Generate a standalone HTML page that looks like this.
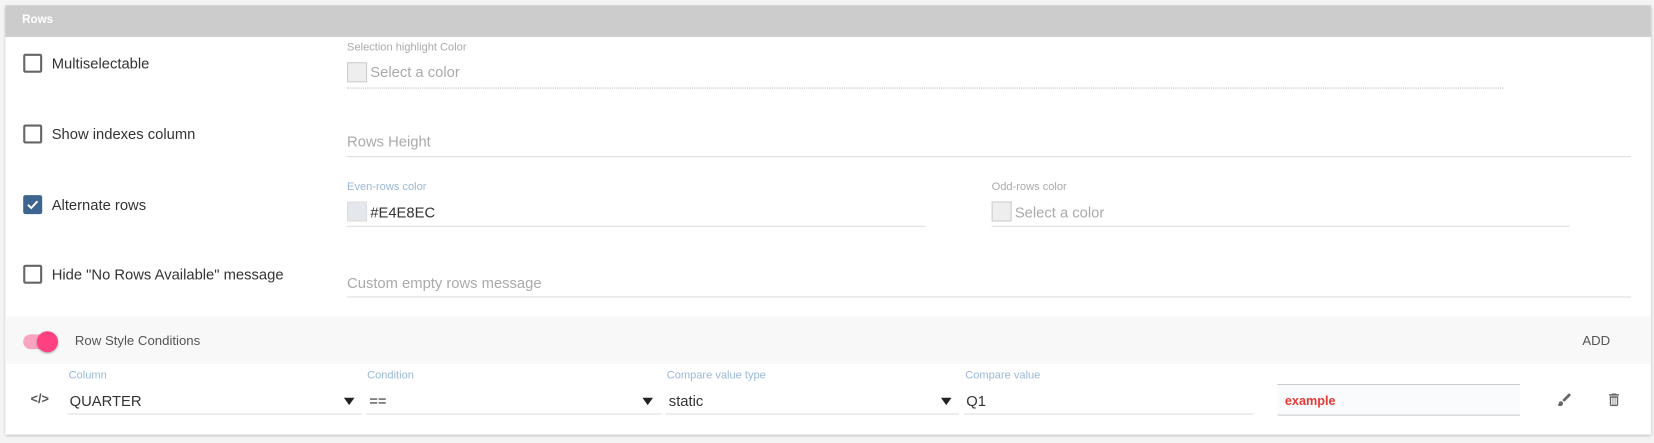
<!DOCTYPE html>
<html><head><meta charset="utf-8"><style>
html,body{margin:0;padding:0;background:#f4f4f4;width:1654px;height:443px;overflow:hidden}
#w{position:absolute;left:0;top:0;width:1568px;height:420px;transform:scale(1.0549);transform-origin:0 0;font-family:"Liberation Sans",sans-serif}
.a{position:absolute;white-space:nowrap}
.card{position:absolute;left:5px;top:5px;width:1560px;height:407px;background:#fff;box-shadow:0 1px 3px rgba(0,0,0,.3)}
.hdr{position:absolute;left:5px;top:5px;width:1560px;height:30px;background:#cccccc}
.cb{position:absolute;left:22px;width:14px;height:14px;border:2px solid #666;border-radius:2px}
.lbl{font-size:14px;color:#333}
.sm{font-size:10.5px;color:#aaa}
.bl{color:#9ab8d8}
.ph{font-size:14px;color:#aaa}
.line{position:absolute;height:1px;background:#ddd}
.sw{position:absolute;width:17px;height:17px;border:1px solid #ccc;background:#eee}
.arr{position:absolute;width:0;height:0;border-left:5px solid transparent;border-right:5px solid transparent;border-top:7px solid #222}
</style></head><body><div id="w">
<div class="card"></div>
<div class="hdr"></div>
<div class="a" style="left:21px;top:13px;font-size:11px;font-weight:bold;color:#fff">Rows</div>

<div class="cb" style="top:51px"></div>
<div class="a lbl" style="left:49px;top:52px">Multiselectable</div>
<div class="a sm" style="left:329px;top:39px">Selection highlight Color</div>
<div class="sw" style="left:329px;top:59px"></div>
<div class="a ph" style="left:351px;top:60px">Select a color</div>
<div class="a" style="left:329px;top:83px;width:1096px;border-top:1px dotted #bbb"></div>

<div class="cb" style="top:118px"></div>
<div class="a lbl" style="left:49px;top:119px">Show indexes column</div>
<div class="a ph" style="left:329px;top:126px">Rows Height</div>
<div class="line" style="left:329px;top:148px;width:1217px"></div>

<div class="cb" style="top:185px;background:#3e6590;border-color:#3e6590"><svg width="14" height="14" viewBox="0 0 14 14" style="position:absolute;left:0;top:0"><path d="M2.5 7.2 L5.6 10.2 L11.5 3.8" fill="none" stroke="#fff" stroke-width="1.8"/></svg></div>
<div class="a lbl" style="left:49px;top:186px">Alternate rows</div>
<div class="a sm bl" style="left:329px;top:171px">Even-rows color</div>
<div class="sw" style="left:329px;top:191px;background:#e4e8ec;border-color:#ddd"></div>
<div class="a lbl" style="left:351px;top:193px">#E4E8EC</div>
<div class="line" style="left:329px;top:214px;width:548px"></div>
<div class="a sm" style="left:940px;top:171px">Odd-rows color</div>
<div class="sw" style="left:940px;top:191px"></div>
<div class="a ph" style="left:962px;top:193px">Select a color</div>
<div class="line" style="left:940px;top:214px;width:548px"></div>

<div class="cb" style="top:251px"></div>
<div class="a lbl" style="left:49px;top:252px">Hide "No Rows Available" message</div>
<div class="a ph" style="left:329px;top:260px">Custom empty rows message</div>
<div class="line" style="left:329px;top:281px;width:1217px"></div>

<div class="a" style="left:5px;top:300px;width:1560px;height:45px;background:#f8f8f8"></div>
<div class="a" style="left:22px;top:317px;width:30px;height:14px;border-radius:7px;background:#f9a4c0"></div>
<div class="a" style="left:35px;top:314px;width:20px;height:20px;border-radius:50%;background:#ff4081;box-shadow:0 1px 2px rgba(0,0,0,.3)"></div>
<div class="a" style="left:71px;top:316px;font-size:12.5px;color:#555">Row Style Conditions</div>
<div class="a" style="left:1500px;top:316px;font-size:12.5px;color:#555">ADD</div>

<div class="a" style="left:29px;top:371px;font-size:12px;color:#555;font-weight:bold">&lt;/&gt;</div>
<div class="a sm bl" style="left:65px;top:350px">Column</div>
<div class="a lbl" style="left:66px;top:372px">QUARTER</div>
<div class="arr" style="left:326px;top:377px"></div>
<div class="line" style="left:64px;top:392px;width:279px"></div>
<div class="a sm bl" style="left:348px;top:350px">Condition</div>
<div class="a lbl" style="left:350px;top:372px">==</div>
<div class="arr" style="left:609px;top:377px"></div>
<div class="line" style="left:347px;top:392px;width:280px"></div>
<div class="a sm bl" style="left:632px;top:350px">Compare value type</div>
<div class="a lbl" style="left:634px;top:372px">static</div>
<div class="arr" style="left:892px;top:377px"></div>
<div class="line" style="left:631px;top:392px;width:278px"></div>
<div class="a sm bl" style="left:915px;top:350px">Compare value</div>
<div class="a lbl" style="left:916px;top:372px">Q1</div>
<div class="line" style="left:914px;top:392px;width:274px"></div>
<div class="a" style="left:1211px;top:364px;width:230px;height:28px;background:#fafbfd;border-top:1px solid #ccc;border-bottom:1px solid #ccc"></div>
<div class="a" style="left:1218px;top:373px;font-size:12px;font-weight:bold;color:#e53935">example</div>
<svg class="a" style="left:1475px;top:371px" width="16" height="16" viewBox="0 0 24 24"><path fill="#666" d="M7 14c-1.66 0-3 1.34-3 3 0 1.31-1.16 2-2 2 .92 1.22 2.49 2 4 2 2.21 0 4-1.79 4-4 0-1.66-1.34-3-3-3zm13.71-9.37l-1.34-1.34a.996.996 0 0 0-1.41 0L9 12.25 11.75 15l8.96-8.96a.996.996 0 0 0 0-1.41z"/></svg>
<svg class="a" style="left:1522px;top:371px" width="16" height="16" viewBox="0 0 24 24"><path fill="#666" d="M6 19c0 1.1.9 2 2 2h8c1.1 0 2-.9 2-2V7H6v12zM8 9h2v10H8zm3 0h2v10h-2zm3 0h2v10h-2zM15.5 4l-1-1h-5l-1 1H5v2h14V4z"/></svg>
</div></body></html>
